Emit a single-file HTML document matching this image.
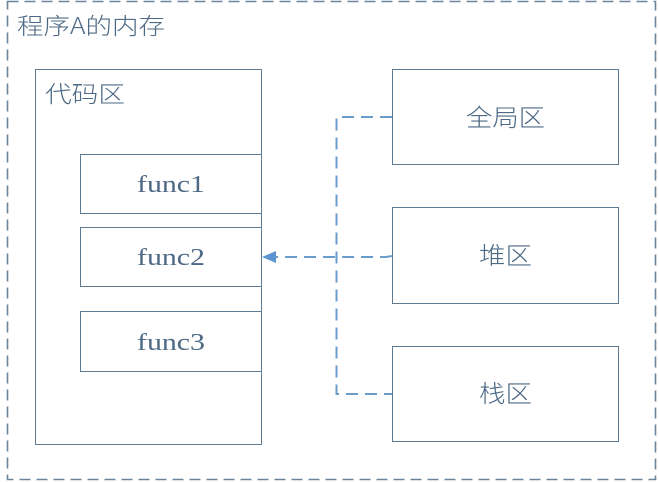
<!DOCTYPE html>
<html><head><meta charset="utf-8"><style>
html,body{margin:0;padding:0;background:#fff;width:659px;height:482px;overflow:hidden}
svg text{font-family:"Liberation Serif","Noto Sans CJK SC",serif;fill:#4d6985}
.cjk{font-family:"Noto Sans CJK SC","WenQuanYi Zen Hei",sans-serif;font-weight:300}
</style></head><body>
<svg width="659" height="482" xmlns="http://www.w3.org/2000/svg">
<rect x="7.5" y="1.5" width="648" height="478" fill="none" stroke="#6a849c" stroke-width="1.6" stroke-dasharray="11,6"/>
<text x="17" y="34" font-size="23" class="cjk" textLength="148" lengthAdjust="spacingAndGlyphs">程序A的内存</text>
<rect x="35.5" y="69.5" width="226" height="375" fill="none" stroke="#5f7b94" stroke-width="1"/>
<text x="45" y="102" font-size="23" class="cjk" textLength="80" lengthAdjust="spacingAndGlyphs">代码区</text>
<g fill="#fff" stroke="#5f7b94" stroke-width="1">
<rect x="80.5" y="154.5" width="181" height="59"/>
<rect x="80.5" y="227.5" width="181" height="59"/>
<rect x="80.5" y="311.5" width="181" height="60"/>
<rect x="392.5" y="69.5" width="226" height="95"/>
<rect x="392.5" y="207.5" width="226" height="96"/>
<rect x="392.5" y="346.5" width="226" height="95"/>
</g>
<text x="137" y="192" font-size="24" textLength="68" lengthAdjust="spacingAndGlyphs">func1</text>
<text x="137" y="265" font-size="24" textLength="68" lengthAdjust="spacingAndGlyphs">func2</text>
<text x="137" y="350" font-size="24" textLength="68" lengthAdjust="spacingAndGlyphs">func3</text>
<text x="466" y="126" font-size="24" class="cjk" textLength="79" lengthAdjust="spacingAndGlyphs">全局区</text>
<text x="479" y="264" font-size="24" class="cjk" textLength="53" lengthAdjust="spacingAndGlyphs">堆区</text>
<text x="479" y="402" font-size="24" class="cjk" textLength="53" lengthAdjust="spacingAndGlyphs">栈区</text>
<g fill="none" stroke="#6a9ccb" stroke-width="2" stroke-dasharray="12,7">
<path d="M392 117 H336.5 V394 H392"/>
<path d="M392 256 L386 257 H274"/>
</g>
<path d="M262 257 L276 251 L276 263 Z" fill="#5b95cf"/>
</svg>
</body></html>
